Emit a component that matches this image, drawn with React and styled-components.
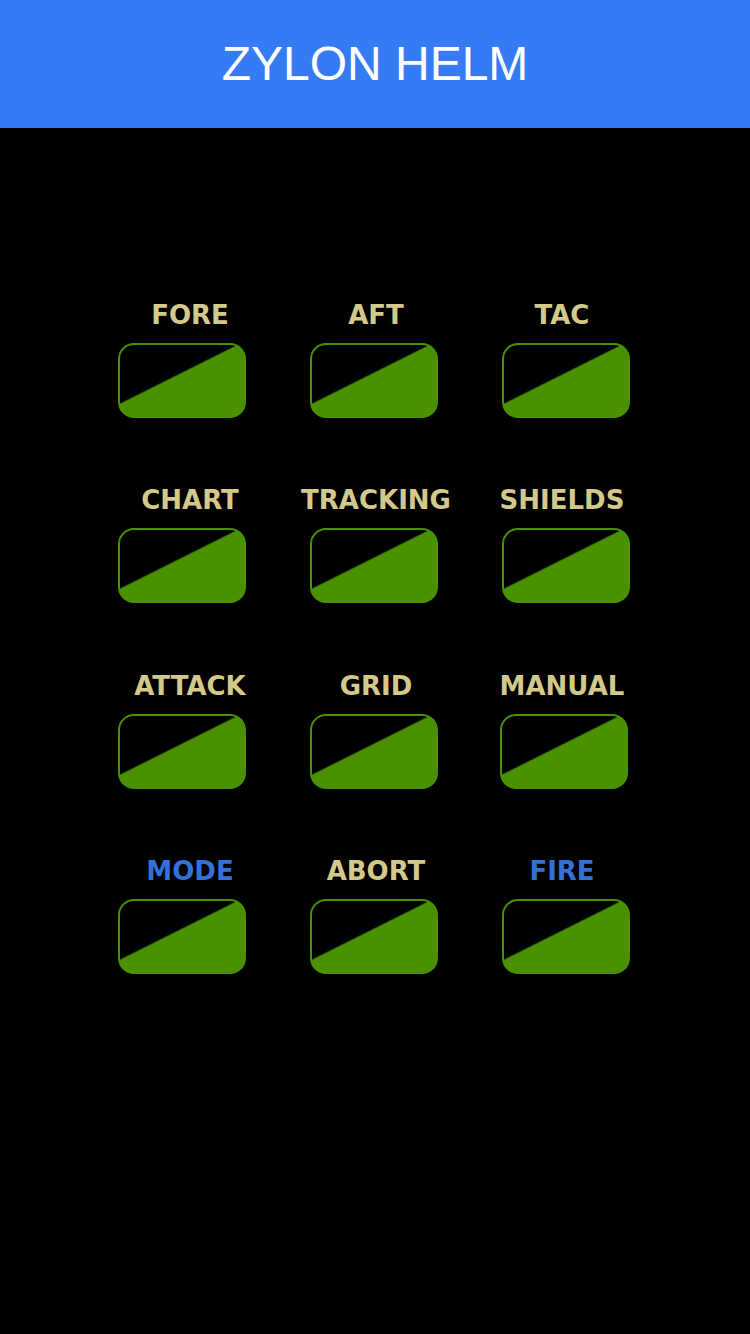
import React from 'react';
import styled, { createGlobalStyle } from 'styled-components';

const GlobalStyle = createGlobalStyle`
    html, body {
        margin: 0;
        padding: 0;
        background: #000;
    }
    body {
        font-family: 'Liberation Sans', Arial, sans-serif;
    }
`;

const Screen = styled.div`
    width: 750px;
    min-height: 1334px;
    background: #000;
`;

const Header = styled.header`
    height: 128px;
    background: #367bf5;
    display: flex;
    align-items: center;
    justify-content: center;
    color: #fff;
    font-size: 48px;
    font-weight: normal;
    padding-bottom: 1px;
    box-sizing: border-box;
`;

const Panel = styled.div`
    display: grid;
    grid-template-columns: repeat(3, 186px);
    justify-content: center;
    row-gap: 67.33px;
    padding: 172px 0 0 2px;
`;

const Cell = styled.div`
    display: flex;
    flex-direction: column;
    align-items: center;
`;

const Label = styled.div`
    font-family: 'DejaVu Sans', Verdana, sans-serif;
    font-size: 26px;
    line-height: 31px;
    font-weight: bold;
    color: ${p => (p.alert ? '#3370d8' : '#d3c98a')};
    white-space: nowrap;
`;

const Toggle = styled.button`
    margin-top: 12px;
    transform: translateX(${p => p.dx}px);
    width: 128px;
    height: 75px;
    padding: 0;
    box-sizing: border-box;
    border: 2px solid #4a9100;
    border-radius: 16px;
    background: linear-gradient(153.43deg, #000 51.6px, #1c3800 52.2px, #4a9100 53.4px);
    cursor: pointer;
`;

const controls = [
    { name: 'FORE' },
    { name: 'AFT' },
    { name: 'TAC' },
    { name: 'CHART' },
    { name: 'TRACKING' },
    { name: 'SHIELDS' },
    { name: 'ATTACK' },
    { name: 'GRID' },
    { name: 'MANUAL', dx: 2 },
    { name: 'MODE', alert: true },
    { name: 'ABORT' },
    { name: 'FIRE', alert: true },
];

// buttons sit a bit off the label centres, per column
const columnShift = [-8, -2, 4];

const App = () => {
    return (
        <Screen>
            <GlobalStyle />
            <Header>ZYLON HELM</Header>
            <Panel>
                {controls.map((item, i) => (
                    <Cell key={item.name}>
                        <Label alert={item.alert}>{item.name}</Label>
                        <Toggle dx={columnShift[i % 3] - (item.dx || 0)} aria-label={item.name} />
                    </Cell>
                ))}
            </Panel>
        </Screen>
    );
};

export default App;
